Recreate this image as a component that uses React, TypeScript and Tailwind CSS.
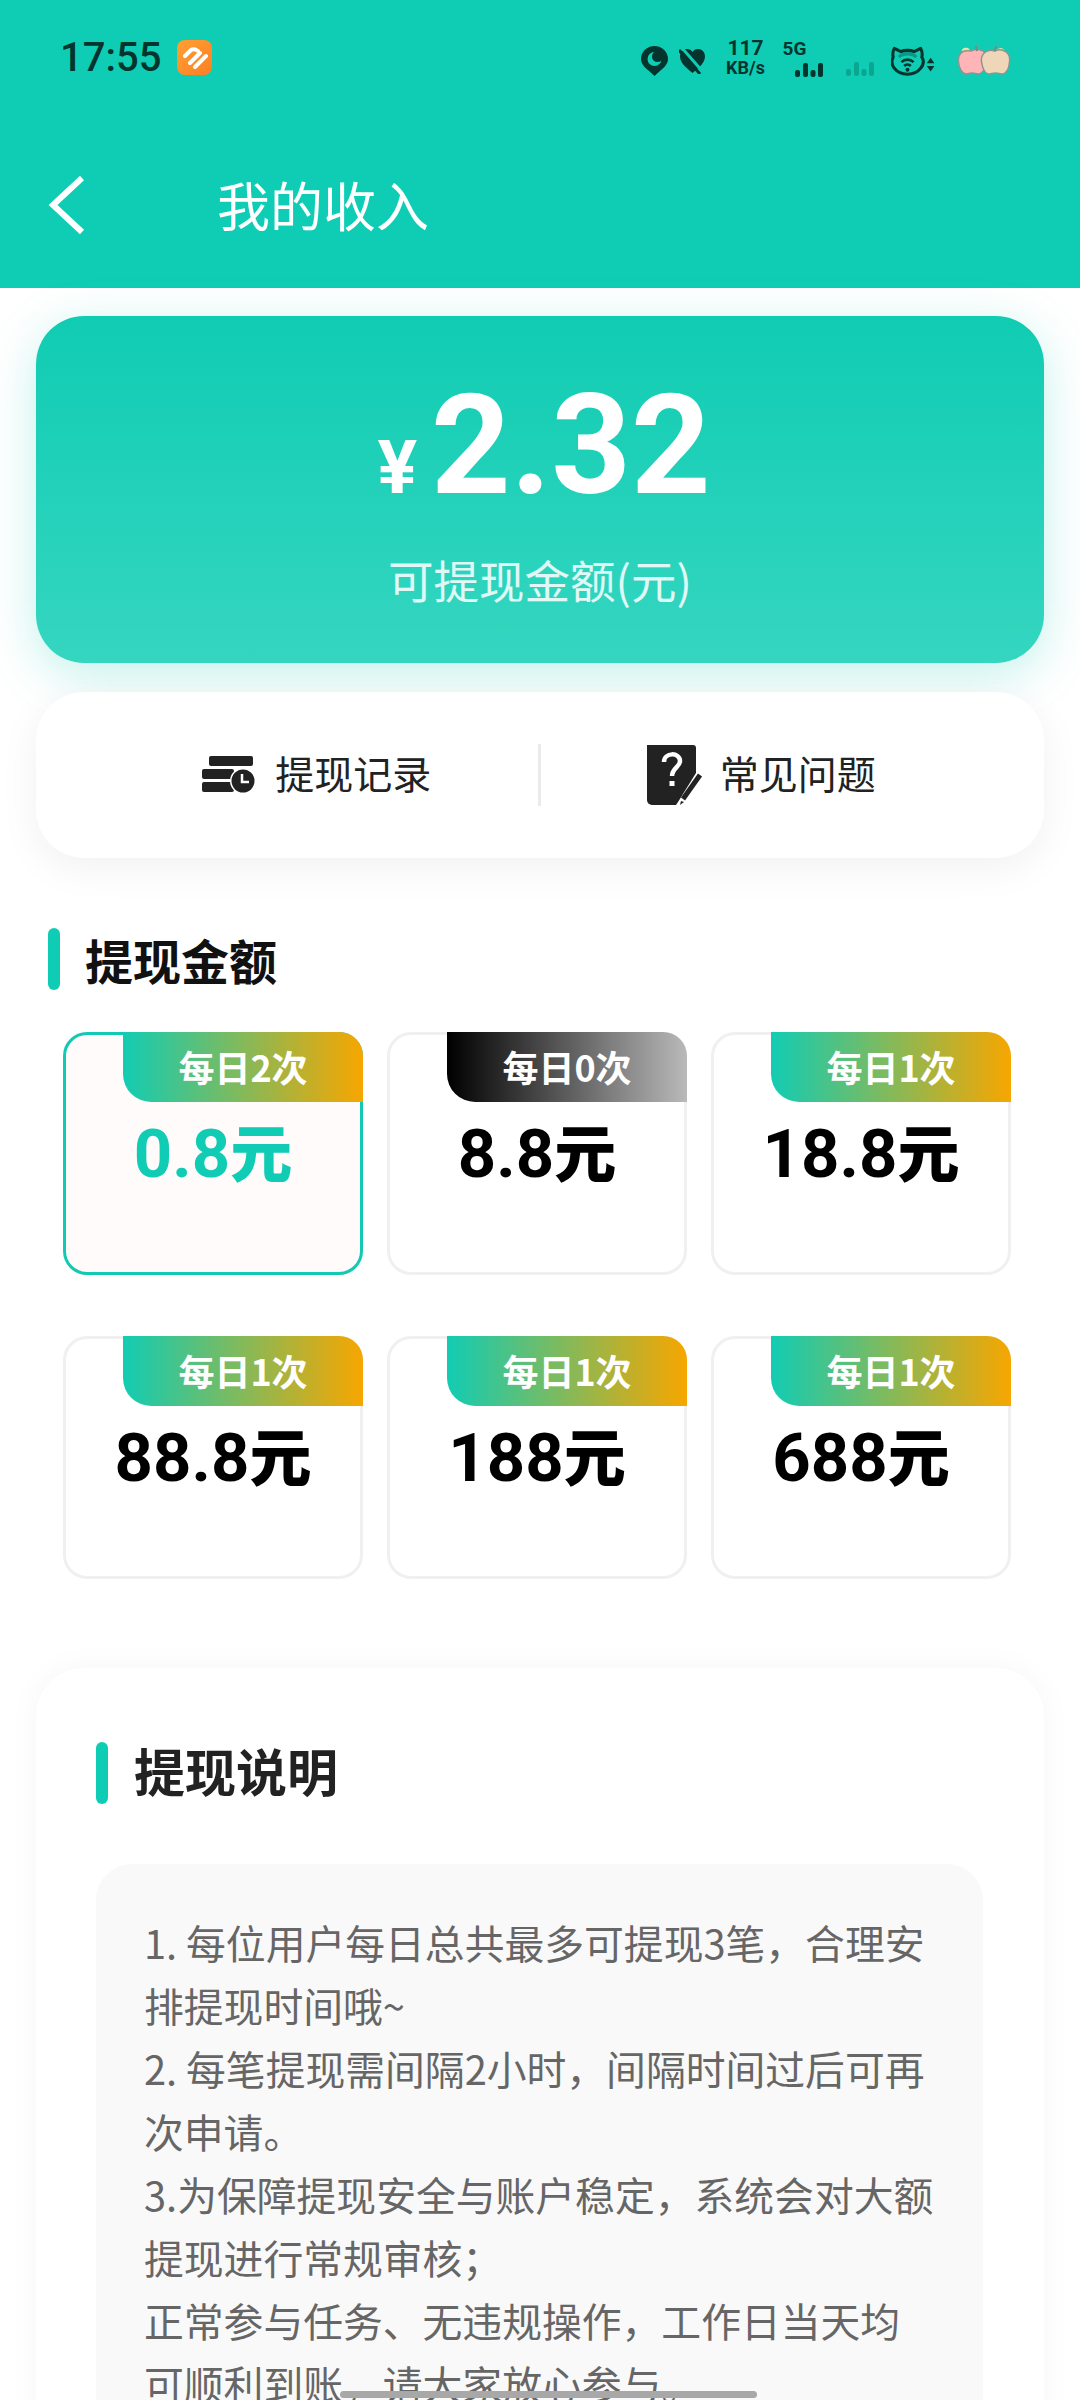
const cjk = "font-['Noto_Sans_CJK_SC','Noto_Sans',sans-serif]"

function PinIcon() {
  return (
    <svg width="27" height="30" viewBox="0 0 27 30" className="shrink-0">
      <path d="M13.5 0C6 0 0 5.6 0 13c0 4.6 3.500 8.300 7.500 11.500L13.500 30l6-5.500C23.500 21.300 27 17.600 27 13 27 5.600 21 0 13.500 0z" fill="#03352e" />
      <circle cx="13.500" cy="13" r="7" fill="#0fcdb5" />
      <circle cx="16.500" cy="10.500" r="5.500" fill="#03352e" />
    </svg>
  )
}

function MutedHeartIcon() {
  return (
    <svg width="27" height="26" viewBox="0 0 27 26" className="shrink-0">
      <path d="M13.500 25C9 21 1 15.500 1 8.500 1 3.500 4.500 1 8 1c2.500 0 4.300 1.300 5.500 3C14.700 2.300 16.500 1 19 1c3.500 0 7 2.500 7 7.500C26 15.500 18 21 13.500 25z" fill="#03352e" />
      <path d="M3 0l21 24" stroke="#0fcdb5" strokeWidth="3" />
      <path d="M0 2l21 24" stroke="#03352e" strokeWidth="3" />
    </svg>
  )
}

function SignalBars({ dim }: { dim?: boolean }) {
  return (
    <svg width="28" height="14" viewBox="0 0 28 14" className="shrink-0">
      <g fill="#03352e" opacity={dim ? 0.25 : 1}>
        <rect x="0" y="7" width="5" height="7" rx="2" />
        <rect x="8" y="0" width="5" height="14" rx="2" />
        <rect x="15.500" y="7" width="5" height="7" rx="2" />
        <rect x="23" y="0" width="5" height="14" rx="2" />
      </g>
    </svg>
  )
}

function WifiCatIcon() {
  return (
    <svg width="44" height="30" viewBox="0 0 40 27" className="shrink-0">
      <path d="M3 2l6 3c3-1.500 9-1.500 12 0l6-3c1.500 3 1.500 6 1 8 2 3 1.500 7-1 10-3 4-7 5.500-12 5.500S6 24 3 20C.5 17 .5 13 2 10 1.500 8 1.500 5 3 2z" fill="none" stroke="#03352e" strokeWidth="2.800" strokeLinejoin="round" />
      <path d="M7 10c4-4 12-4 16 0" fill="none" stroke="#03352e" strokeOpacity="0.35" strokeWidth="2.800" />
      <path d="M9.500 14.500c3-3 8-3 11 0M12 18c1.700-1.700 4.300-1.700 6 0" fill="none" stroke="#03352e" strokeWidth="2.400" />
      <circle cx="15" cy="21.500" r="1.800" fill="#03352e" />
      <path d="M36 10.500l3.500 5h-7zM32.500 18h7L36 23z" fill="#03352e" />
    </svg>
  )
}

function ApplesIcon() {
  return (
    <svg width="54" height="30" viewBox="0 0 54 30" className="shrink-0">
      <path d="M5 6c-1-3 2-5 6-4l3 3z" fill="#e3e6a0" />
      <path d="M38 4l5-2c3 0 5 2 5 5z" fill="#d9dd8c" />
      <path d="M14 5c4-2 8-2 12 0 3 2 4 6 3 11-1 6-3 12-8 12-2 0-3-1-6-1s-3 1-6 1C5 28 2 22 1.500 16 1 10 3 7 6 5.500c3-1.500 6-.5 8-.5z" fill="#ffb5b8" stroke="#8e9590" strokeWidth="1.500" />
      <path d="M38 5c4-2 8-1 11 1 3 2 4 6 3.500 10-.5 6-3 12-8 12-2 0-3-1-6-1s-4 1-6 1c-5 0-7-6-8-12-.5-4 1-8 4-10 3-2 6-2 9-1z" fill="#f0d6b8" stroke="#8e9590" strokeWidth="1.500" />
      <path d="M20 5l-1-5M38 5l1-5" stroke="#7d8781" strokeWidth="2" />
    </svg>
  )
}

function StatusBar() {
  return (
    <div className="flex h-[145px] items-start pl-[60px] text-[#03352e]">
      <span className="mt-[34px] font-['Roboto',sans-serif] text-[40px] leading-[48px] font-medium">17:55</span>
      <div className="mt-[40px] ml-[16px] flex size-[35px] items-center justify-center rounded-[8px] bg-gradient-to-br from-[#ffa033] to-[#fb7f24]">
        <svg width="26" height="24" viewBox="0 0 26 24">
          <path d="M3 10l6-6c3-2 5 0 7 1M8 17L18 7M13 21L24 10" fill="none" stroke="#fff" strokeWidth="4" strokeLinecap="round" />
        </svg>
      </div>
      <div className="mt-[43px] ml-[429px] flex items-center">
        <PinIcon />
        <div className="ml-[11px]">
          <MutedHeartIcon />
        </div>
        <div className="-mt-[5px] ml-[17px] flex w-[44px] flex-col items-center font-['Roboto',sans-serif] font-bold">
          <span className="text-[21px] leading-[20px]">117</span>
          <span className="text-[18px] leading-[20px]">KB/s</span>
        </div>
        <div className="-mt-[5px] ml-[15px] flex w-[42px] flex-col">
          <span className="font-['Roboto',sans-serif] text-[19px] leading-[20px] font-bold">5G</span>
          <span className="mt-[4px] ml-[13px]">
            <SignalBars />
          </span>
        </div>
        <div className="mt-[16px] ml-[22px]">
          <SignalBars dim />
        </div>
        <div className="ml-[17px]">
          <WifiCatIcon />
        </div>
        <div className="ml-[22px]">
          <ApplesIcon />
        </div>
      </div>
    </div>
  )
}

function HistoryIcon() {
  return (
    <svg width="54" height="38" viewBox="0 0 54 38" className="shrink-0">
      <rect x="7" y="0" width="44" height="10" rx="2" fill="#222" />
      <rect x="0" y="13" width="32" height="10" rx="2" fill="#222" />
      <rect x="0" y="26" width="32" height="10" rx="2" fill="#222" />
      <circle cx="41" cy="25" r="13" fill="#fff" />
      <circle cx="41" cy="25" r="11.500" fill="#222" />
      <path d="M40 18v8h7" fill="none" stroke="#fff" strokeWidth="2.500" />
    </svg>
  )
}

function QuestionIcon() {
  return (
    <svg width="56" height="60" viewBox="0 0 56 60" className="shrink-0">
      <path d="M0 0h46a3 3 0 0 1 3 3v25L31 57l-2 3H5a5 5 0 0 1-5-5z" fill="#222" />
      <path d="M17 17c0-10 16-10 16-1 0 6-8 7-8 15" fill="none" stroke="#fff" strokeWidth="4.500" />
      <rect x="22.500" y="36" width="5" height="5" fill="#fff" />
      <path d="M53 30L36 54" stroke="#222" strokeWidth="5" />
      <path d="M34 56l-1 4 4-3z" fill="#222" />
    </svg>
  )
}

type Tile = { tag: string; amount: string; selected?: boolean; soldOut?: boolean }

const tiles: Tile[] = [
  { tag: "每日2次", amount: "0.8", selected: true },
  { tag: "每日0次", amount: "8.8", soldOut: true },
  { tag: "每日1次", amount: "18.8" },
  { tag: "每日1次", amount: "88.8" },
  { tag: "每日1次", amount: "188" },
  { tag: "每日1次", amount: "688" },
]

function AmountTile({ tile }: { tile: Tile }) {
  return (
    <div
      className={
        tile.selected
          ? "flex h-[243px] flex-col items-end rounded-[24px] border-[3px] border-[#14c9b3] bg-[#fffbfa]"
          : "flex h-[243px] flex-col items-end rounded-[24px] border-[3px] border-[#f0f0f0] bg-white"
      }
    >
      <div
        className={
          tile.soldOut
            ? "-mt-[3px] -mr-[3px] flex h-[70px] w-[240px] items-center justify-center rounded-tr-[24px] rounded-bl-[28px] bg-linear-to-r/srgb from-[#000000] to-[#b9b9b9] pb-[2px] text-[36px] font-bold text-white"
            : "-mt-[3px] -mr-[3px] flex h-[70px] w-[240px] items-center justify-center rounded-tr-[24px] rounded-bl-[28px] bg-linear-to-r/srgb from-[#12ccb3] to-[#f7a600] pb-[2px] text-[36px] font-bold text-white"
        }
      >
        {tile.tag}
      </div>
      <div
        className={
          tile.selected
            ? "mt-[12px] w-full text-center font-['Roboto',sans-serif] text-[67px] leading-[72px] font-bold text-[#10ccb5]"
            : "mt-[12px] w-full text-center font-['Roboto',sans-serif] text-[67px] leading-[72px] font-bold text-black"
        }
      >
        {tile.amount}
        <span className={`${cjk} text-[62px] font-black`}>元</span>
      </div>
    </div>
  )
}

function SectionBar() {
  return <div className="h-[62px] w-[12px] rounded-full bg-[#0fcdb5]" />
}

const notes = [
  "1. 每位用户每日总共最多可提现3笔，合理安",
  "排提现时间哦~",
  "2. 每笔提现需间隔2小时，间隔时间过后可再",
  "次申请。",
  "3.为保障提现安全与账户稳定，系统会对大额",
  "提现进行常规审核；",
  "正常参与任务、无违规操作，工作日当天均",
  "可顺利到账，请大家放心参与。",
]

export default function App() {
  return (
    <div className={`relative h-[2400px] w-[1080px] overflow-hidden bg-white ${cjk}`}>
      <header className="h-[288px] bg-[#0fcdb5]">
        <StatusBar />
        <div className="flex h-[120px] items-center pl-[48px]">
          <svg width="38" height="60" viewBox="0 0 38 60" fill="none" className="shrink-0">
            <path d="M34 3L5 30l29 27" stroke="#fff" strokeWidth="6" />
          </svg>
          <h1 className="ml-[131px] -mt-[3px] text-[53px] leading-[60px] font-normal text-white">我的收入</h1>
        </div>
      </header>

      <main className="px-[36px] pt-[28px]">
        <section className="flex h-[347px] flex-col items-center rounded-[48px] bg-linear-to-b/srgb from-[#10ccb3] to-[#35d6c0] shadow-[0_12px_48px_rgba(16,204,179,0.25)]">
          <div className="mt-[60px] flex items-baseline pl-[8px] text-white">
            <span className="mr-[14px] font-['Roboto',sans-serif] text-[74px] leading-[140px] font-bold">¥</span>
            <span className="font-['Roboto',sans-serif] text-[139px] leading-[140px] font-bold">2.32</span>
          </div>
          <p className="mt-[13px] text-[45.500px] leading-[56px] text-white/85">可提现金额(元)</p>
        </section>

        <section className="relative mt-[29px] flex h-[166px] items-center rounded-[48px] bg-white shadow-[0_10px_40px_rgba(0,0,0,0.06)]">
          <div className="flex flex-1 items-center justify-center gap-[19px] pl-[60px] text-[39px] leading-[50px] text-[#222]">
            <HistoryIcon />
            <span className="-mt-[6px]">提现记录</span>
          </div>
          <div className="h-[62px] w-[3px] bg-[#ebebeb]" />
          <div className="flex flex-1 items-center justify-center gap-[17px] pr-[62px] text-[39px] leading-[50px] text-[#222]">
            <QuestionIcon />
            <span className="-mt-[6px]">常见问题</span>
          </div>
        </section>

        <div className="mt-[70px] flex items-center gap-[25px] pl-[12px]">
          <SectionBar />
          <h2 className="text-[48px] leading-[62px] font-bold text-[#111]">提现金额</h2>
        </div>

        <div className="mt-[42px] ml-[27px] grid w-[948px] grid-cols-3 gap-x-[24px] gap-y-[61px]">
          {tiles.map((tile, i) => (
            <AmountTile key={i} tile={tile} />
          ))}
        </div>

        <section className="mt-[89px] h-[800px] rounded-[48px] bg-white px-[60px] pt-[74px] shadow-[0_0_32px_rgba(0,0,0,0.04)]">
          <div className="flex items-center gap-[26px]">
            <SectionBar />
            <h2 className="-mt-[6px] text-[51px] leading-[62px] font-bold text-[#222]">提现说明</h2>
          </div>
          <div className="mt-[60px] h-[700px] w-[887px] rounded-[36px] bg-[#f9f9f9] px-[48px] pt-[46px] text-[39.800px] leading-[63px] text-[#666]">
            {notes.map((line) => (
              <p key={line} className="whitespace-nowrap">{line}</p>
            ))}
          </div>
        </section>
      </main>

      <div className="absolute bottom-[2px] left-[340px] h-[7px] w-[417px] rounded-full bg-[#a8a8a8]" />
    </div>
  )
}
